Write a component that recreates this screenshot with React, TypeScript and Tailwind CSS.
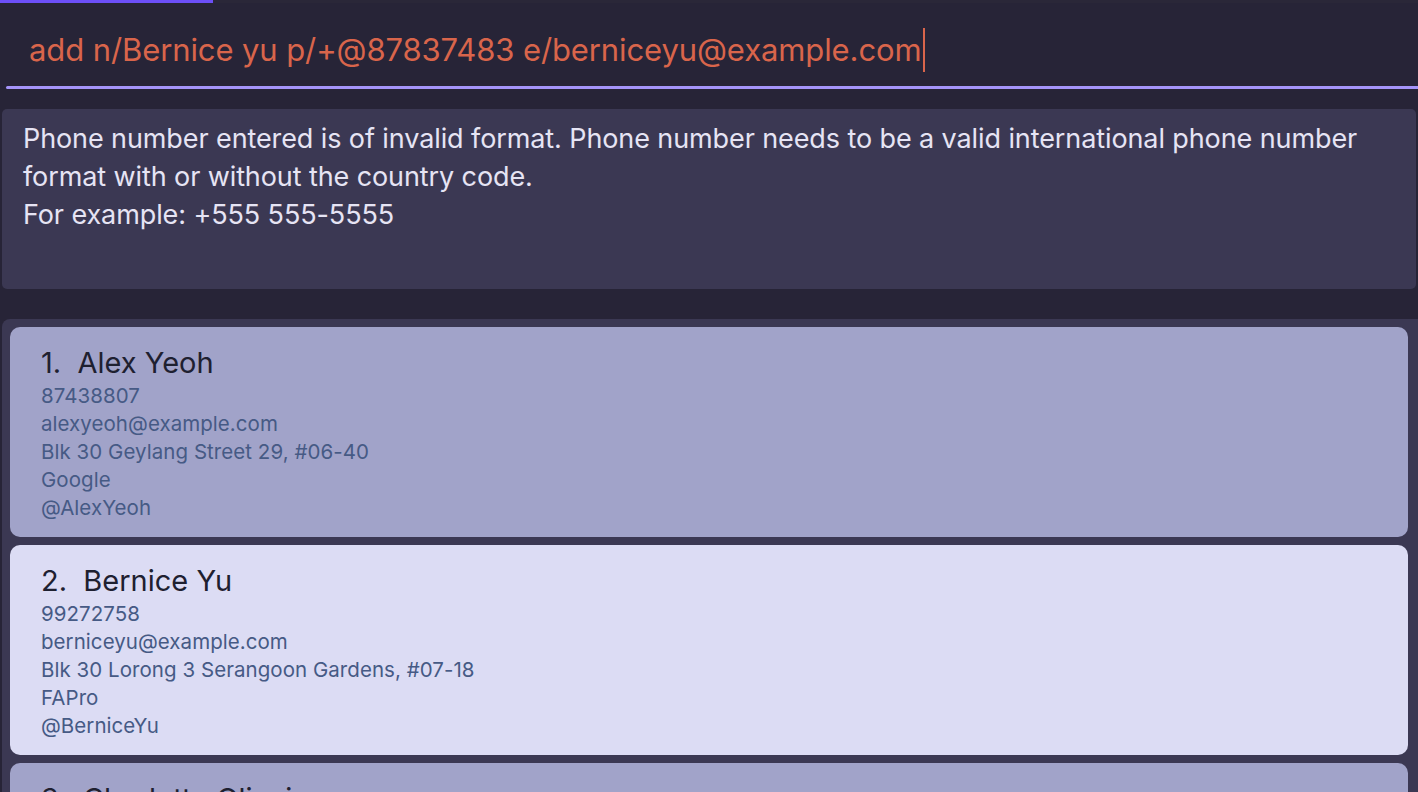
const persons = [
  {
    name: 'Alex Yeoh',
    phone: '87438807',
    email: 'alexyeoh@example.com',
    address: 'Blk 30 Geylang Street 29, #06-40',
    company: 'Google',
    handle: '@AlexYeoh',
  },
  {
    name: 'Bernice Yu',
    phone: '99272758',
    email: 'berniceyu@example.com',
    address: 'Blk 30 Lorong 3 Serangoon Gardens, #07-18',
    company: 'FAPro',
    handle: '@BerniceYu',
  },
  {
    name: 'Charlotte Oliveiro',
    phone: '93210283',
    email: 'charlotte@example.com',
    address: 'Blk 11 Ang Mo Kio Street 74, #11-04',
    company: 'Shopee',
    handle: '@Charlotte',
  },
];

function PersonCard({ index, p }: { index: number; p: (typeof persons)[number] }) {
  const odd = index % 2 === 0;
  return (
    <div
      className={`h-[210px] shrink-0 rounded-[10px] px-[31px] pt-[18px] ${
        odd ? 'bg-[#a1a3c9]' : 'bg-[#dcdcf4]'
      }`}
    >
      <div className="text-[29px] leading-[36px] text-[#1e2030]">
        {index + 1}.&nbsp;&nbsp;{p.name}
      </div>
      <div className="mt-[1px] text-[20.5px] leading-[28px] text-[#465a85] tracking-[0.05px]">
        <div>{p.phone}</div>
        <div>{p.email}</div>
        <div>{p.address}</div>
        <div>{p.company}</div>
        <div>{p.handle}</div>
      </div>
    </div>
  );
}

export default function App() {
  return (
    <div
      className="w-full h-[792px] overflow-hidden bg-[#272437] flex flex-col"
      style={{ fontFamily: 'Inter, "Noto Sans", sans-serif' }}
    >
      {/* progress strip */}
      <div className="flex h-[3px] shrink-0">
        <div className="w-[213px] bg-[#6c4ff7]" />
        <div className="flex-1 bg-[#2a2738]" />
      </div>

      {/* command box */}
      <div className="h-[83px] shrink-0 flex items-center pl-[29px] pt-[10px]">
        <span className="text-[31px] leading-[40px] text-[#d9654b] tracking-[-0.1px]">
          add n/Bernice yu p/+@87837483 e/berniceyu@example.com
        </span>
        <span className="ml-[1px] w-[2px] h-[44px] bg-[#d9654b]" />
      </div>
      <div className="ml-[6px] h-[3px] shrink-0 rounded-l-full bg-[#a594f9]" />

      {/* result display */}
      <div className="mt-[20px] mx-[2px] h-[180px] shrink-0 rounded-[5px] bg-[#3b3853] px-[21px] pt-[11px]">
        <p className="text-[27px] leading-[38px] text-[#e6e4f4] tracking-[-0.1px]">
          Phone number entered is of invalid format. Phone number needs to be a valid international phone number
          format with or without the country code.
          <br />
          For example: +555 555-5555
        </p>
      </div>

      {/* person list */}
      <div className="mt-[30px] ml-[2px] flex-1 rounded-tl-[8px] bg-[#3b3853] pt-[8px] pl-[8px] pr-[10px] flex flex-col gap-[8px] overflow-hidden">
        {persons.map((p, i) => (
          <PersonCard key={p.name} index={i} p={p} />
        ))}
      </div>
    </div>
  );
}
